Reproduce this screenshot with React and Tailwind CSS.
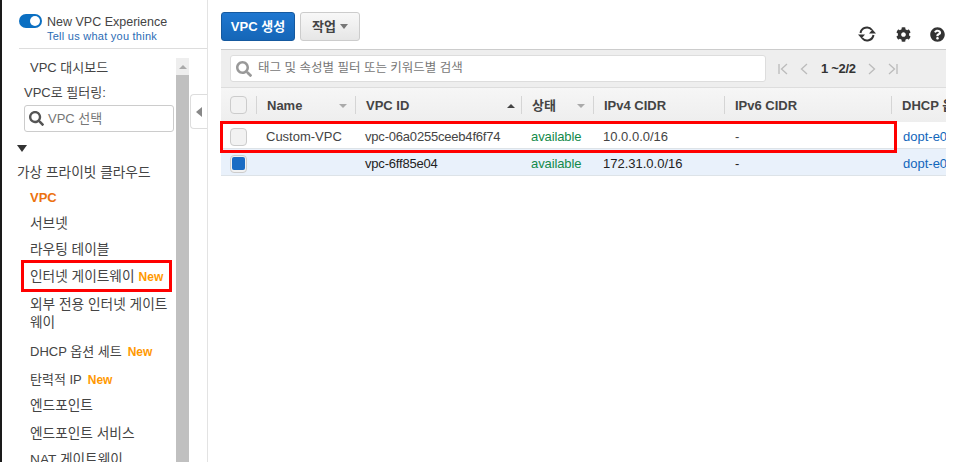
import { FaCog, FaQuestionCircle, FaSearch } from 'react-icons/fa';

function New({ className = 'ml-1' }) {
	return <span className={`text-[12px] font-bold text-[#f90] ${className}`}>New</span>;
}

function NavItem({ children, className = '' }) {
	return <div className={`pl-[28px] pr-1 leading-[18px] text-[#444] ${className}`}>{children}</div>;
}

function Checkbox({ checked }) {
	return (
		<div className="flex h-[18px] w-[17px] items-center justify-center rounded-[4px] border border-[#ccc] bg-[#f2f2f2]">
			{checked && <div className="h-[13px] w-[13px] rounded-[2px] bg-[#1a6cc4]" />}
		</div>
	);
}

function HeadCell({ children, sort, className = '' }) {
	return (
		<div className={`relative flex h-full items-center pl-[11px] pt-[1px] font-bold text-[#444] ${className}`}>
			<span className="absolute left-0 top-[8px] h-[18px] w-px bg-[#d5d5d5]" />
			{children}
			{sort === 'down' && <span className="ml-auto mr-[8px] h-0 w-0 border-x-[4px] border-t-[4px] border-x-transparent border-t-[#aaa]" />}
			{sort === 'up' && <span className="ml-auto mr-[6px] h-0 w-0 border-x-[4px] border-b-[4px] border-x-transparent border-b-[#444]" />}
		</div>
	);
}

const cols = 'grid grid-cols-[35px_99px_166px_72px_131px_167px_55px]';

function Row({ name, id, cidr, checked, text, className = '' }) {
	return (
		<div className={`${cols} h-[27px] items-center border-b border-[#dde3e8] ${className}`}>
			<div className="pl-[9px]"><Checkbox checked={checked} /></div>
			<div className="pl-[10px] text-[#444]">{name}</div>
			<div className={`pl-[10px] tracking-[-0.2px] ${text}`}>{id}</div>
			<div className="pl-[10px] tracking-[-0.1px] text-[#138a4b]">available</div>
			<div className={`pl-[10px] ${text}`}>{cidr}</div>
			<div className={`pl-[11px] ${text}`}>-</div>
			<div className="overflow-hidden whitespace-nowrap pl-[12px] text-[#1166bb]">dopt-e0c1a2</div>
		</div>
	);
}

export default function App() {
	return (
		<div className="relative flex h-[462px] w-[956px] overflow-hidden bg-white text-[13px] font-['Liberation_Sans','Noto_Sans_CJK_KR',sans-serif] text-[#444]">
			{/* sidebar */}
			<div className="flex w-[208px] shrink-0 flex-col border-l-2 border-r border-l-[#1a1a1a] border-r-[#e3e3e3]">
				<div className="ml-[17px] flex h-[49px] gap-[5px] border-b border-[#ddd] pt-[14px]">
					<div className="flex h-[14px] w-[23px] items-center justify-end rounded-full bg-[#0b6fc2] pr-[2px]">
						<div className="h-[10px] w-[10px] rounded-full bg-white" />
					</div>
					<div>
						<div className="text-[12.5px] leading-[16px]">New VPC Experience</div>
						<div className="text-[11px] leading-[13px] tracking-[0.25px] text-[#2b6cb5]">Tell us what you think</div>
					</div>
				</div>
				<div className="flex min-h-0 flex-1">
					<div className="w-[174px] shrink-0 pt-[10px]">
						<NavItem>VPC 대시보드</NavItem>
						<div className="mt-[7px] pl-[22px] leading-[18px]">VPC로 필터링:</div>
						<div className="ml-[22px] mt-[3px] flex h-[27px] w-[150px] items-center gap-[4px] rounded-[3px] border border-[#ccc] pl-[4px] text-[#777]">
							<FaSearch className="h-[15px] w-[15px] text-[#555]" />
							VPC 선택
						</div>
						<div className="ml-[15px] mt-[13px] h-0 w-0 border-x-[5px] border-t-[7px] border-x-transparent border-t-[#333]" />
						<div className="mt-[12px] pl-[15px] text-[13.7px] leading-[18px]">가상 프라이빗 클라우드</div>
						<div className="flex flex-col gap-[8px] pt-[7px] text-[13.7px]">
							<NavItem className="text-[13px] font-bold !text-[#ec7211]">VPC</NavItem>
							<NavItem>서브넷</NavItem>
							<NavItem>라우팅 테이블</NavItem>
							<NavItem className="mt-[1px]">인터넷 게이트웨이<New /></NavItem>
							<NavItem className="mt-[2px]">외부 전용 인터넷 게이트웨이</NavItem>
							<NavItem className="mt-[3px] text-[13px]">DHCP 옵션 세트<New className="ml-[6px]" /></NavItem>
							<NavItem className="mt-[2px] text-[13px]">탄력적 IP<New className="ml-[6px]" /></NavItem>
							<NavItem>엔드포인트</NavItem>
							<NavItem className="mt-[2px]">엔드포인트 서비스</NavItem>
							<NavItem>NAT 게이트웨이</NavItem>
						</div>
					</div>
					<div className="mt-[9px] flex w-[13px] shrink-0 flex-col bg-[#c0c0c0]">
						<div className="flex h-[17px] items-center justify-center bg-[#eee]">
							<span className="h-0 w-0 border-x-[4px] border-b-[4px] border-x-transparent border-b-[#aaa]" />
						</div>
					</div>
					<div className="mt-[45px] ml-[1px] flex h-[35px] w-[18px] items-center justify-center rounded-l-[4px] border border-r-0 border-[#ddd] bg-white">
						<span className="h-0 w-0 border-y-[5px] border-r-[6px] border-y-transparent border-r-[#888]" />
					</div>
				</div>
			</div>

			{/* main */}
			<div className="relative min-w-0 flex-1 pl-[13px] pr-[10px] pt-[12px]">
				<div className="flex h-[30px] items-start gap-[5px]">
					<div className="flex h-[29px] w-[74px] items-center justify-center rounded-[3px] border border-[#15599f] bg-gradient-to-b from-[#1f77d0] to-[#1566b7] font-bold text-white">VPC 생성</div>
					<div className="flex h-[29px] w-[60px] items-center justify-center gap-[4px] rounded-[3px] border border-[#ccc] bg-gradient-to-b from-[#f8f8f8] to-[#e6e6e6] font-bold">
						작업
						<span className="h-0 w-0 border-x-[4px] border-t-[5px] border-x-transparent border-t-[#777]" />
					</div>
					<div className="ml-auto flex items-center gap-[19px] pr-[1px] pt-[13px] text-[#333]">
						<svg viewBox="0 0 20 18" className="h-[18px] w-[20px]" fill="none" stroke="#333" strokeWidth="2">
							<path d="M3.5 8 A6.5 6.5 0 0 1 15 5" />
							<path d="M16.5 10 A6.5 6.5 0 0 1 5 13" />
							<path d="M12 8.5h7l-3.5-4z" fill="#333" stroke="none" />
							<path d="M1 9.5h7l-3.5 4z" fill="#333" stroke="none" />
						</svg>
						<FaCog className="h-[15px] w-[15px]" />
						<FaQuestionCircle className="h-[15px] w-[15px]" />
					</div>
				</div>

				<div className="mt-[7px] flex h-[38px] items-center border-t border-[#ccc] bg-[#eee] pl-[9px]">
					<div className="flex h-[27px] w-[536px] items-center gap-[6px] rounded-[3px] border border-[#ddd] bg-white pl-[5px] text-[12.5px] text-[#777]">
						<FaSearch className="h-[16px] w-[16px] text-[#999]" />
						태그 및 속성별 필터 또는 키워드별 검색
					</div>
					<div className="ml-[12px] flex items-center gap-[12px] text-[#bbb]">
						<svg viewBox="0 0 10 12" className="h-[12px] w-[10px]" fill="none" stroke="currentColor" strokeWidth="1.3"><path d="M1 1v10M9 1L3.5 6 9 11" /></svg>
						<svg viewBox="0 0 8 12" className="h-[12px] w-[8px]" fill="none" stroke="currentColor" strokeWidth="1.3"><path d="M7 1L1.5 6 7 11" /></svg>
						<span className="ml-[1px] font-bold tracking-[-0.3px] text-[#333]">1 ~2/2</span>
						<svg viewBox="0 0 8 12" className="h-[12px] w-[8px]" fill="none" stroke="currentColor" strokeWidth="1.3"><path d="M1 1l5.5 5L1 11" /></svg>
						<svg viewBox="0 0 10 12" className="h-[12px] w-[10px]" fill="none" stroke="currentColor" strokeWidth="1.3"><path d="M1 1l5.5 5L1 11M9 1v10" /></svg>
					</div>
				</div>

				<div className={`${cols} h-[35px] items-center border-t border-[#ddd] bg-gradient-to-b from-[#f6f6f6] to-[#eee]`}>
					<div className="pl-[9px]"><Checkbox /></div>
					<HeadCell sort="down">Name</HeadCell>
					<HeadCell sort="up">VPC ID</HeadCell>
					<HeadCell sort="down">상태</HeadCell>
					<HeadCell>IPv4 CIDR</HeadCell>
					<HeadCell>IPv6 CIDR</HeadCell>
					<HeadCell className="overflow-hidden whitespace-nowrap">DHCP 옵션</HeadCell>
				</div>
				<Row name="Custom-VPC" id="vpc-06a0255ceeb4f6f74" cidr="10.0.0.0/16" text="text-[#444]" className="pt-[4px]" />
				<Row name="" id="vpc-6ff85e04" cidr="172.31.0.0/16" checked text="text-[#222]" className="bg-[#e9f1fb] pt-[3px]" />

				{/* red highlight boxes */}
				<div className="pointer-events-none absolute left-[12px] top-[121px] h-[32px] w-[677px] border-[3px] border-[#f00]" />
			</div>
			<div className="pointer-events-none absolute left-[21px] top-[260px] h-[32px] w-[151px] border-[3px] border-[#f00]" />
		</div>
	);
}
